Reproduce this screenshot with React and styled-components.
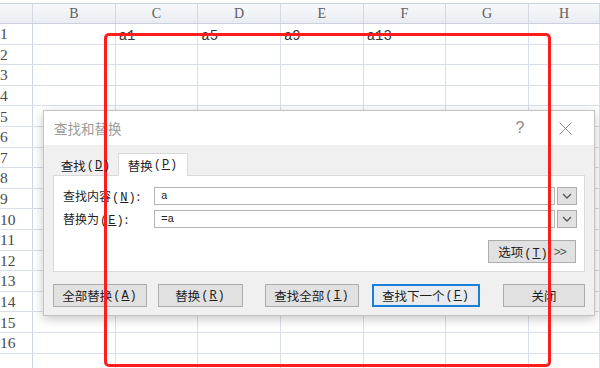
import React from "react";
import styled, { createGlobalStyle } from "styled-components";

const GlobalStyle = createGlobalStyle`
  html, body { margin: 0; padding: 0; background: #ffffff; }
  body { overflow: hidden; }
  * { box-sizing: border-box; }
`;

const COLS = "33px repeat(6, 82.67px) 1fr";
const GRID = "#d9dfe8";

const Page = styled.div`
  position: relative;
  width: 600px;
  height: 368px;
  overflow: hidden;
  background: #fff;
`;

const Sheet = styled.div`
  padding-top: 3px;
  display: flex;
  flex-direction: column;
`;

const HeaderRow = styled.div`
  display: grid;
  grid-template-columns: ${COLS};
  height: 21px;
  background: linear-gradient(#f7f8fa, #e9edf2);
  border-top: 1px solid #c9d2de;
  border-bottom: 1px solid #c9d2de;
`;

const HeaderCell = styled.div`
  display: flex;
  align-items: center;
  justify-content: center;
  border-right: 1px solid #d3dae4;
  font-family: "Liberation Serif", serif;
  font-size: 14px;
  color: #5e5e5e;
`;

const Row = styled.div`
  display: grid;
  grid-template-columns: ${COLS};
  height: 20.6px;
  border-bottom: 1px solid ${GRID};
`;

const RowHead = styled.div`
  display: flex;
  align-items: center;
  padding-top: 1px;
  border-right: 1px solid #cfd6e0;
  font-family: "Liberation Serif", serif;
  font-size: 15.5px;
  color: #4a4a4a;
`;

const Cell = styled.div`
  display: flex;
  align-items: flex-end;
  padding: 0 0 0 3px;
  border-right: 1px solid ${GRID};
  font-family: "Liberation Mono", monospace;
  font-size: 14px;
  line-height: 16px;
  color: #333;
`;

const Dialog = styled.div`
  position: absolute;
  left: 43px;
  top: 110px;
  width: 552px;
  background: #f0f0f0;
  border: 1px solid #c4c4c4;
  box-shadow: 0 3px 10px rgba(0, 0, 0, 0.22);
  font-family: "Noto Sans CJK SC", sans-serif;
`;

const TitleBar = styled.div`
  height: 34px;
  background: #fff;
  display: flex;
  align-items: center;
  padding: 0 0 0 10px;
`;

const Title = styled.div`
  flex: 1;
  font-size: 13.5px;
  color: #9b9b9b;
`;

const Help = styled.div`
  width: 40px;
  font-family: "Liberation Sans", sans-serif;
  font-size: 16px;
  color: #8a8a8a;
  text-align: center;
`;

const Close = styled.div`
  width: 50px;
  display: flex;
  align-items: center;
  justify-content: center;
  margin-right: 4px;
`;

const Body = styled.div`
  padding: 8px 9px 8px 9px;
`;

const Tabs = styled.div`
  display: flex;
  align-items: flex-end;
  padding-left: 1px;
  height: 22px;
`;

const Tab = styled.div`
  position: relative;
  z-index: 1;
  display: flex;
  align-items: center;
  justify-content: center;
  width: ${(p) => (p.$active ? "70px" : "64px")};
  height: ${(p) => (p.$active ? "23px" : "20px")};
  margin-bottom: ${(p) => (p.$active ? "-1px" : "0")};
  background: ${(p) => (p.$active ? "#fff" : "transparent")};
  border: 1px solid ${(p) => (p.$active ? "#d9d9d9" : "transparent")};
  border-bottom: none;
  font-size: 12.5px;
  color: #1e1e1e;
`;

const Panel = styled.div`
  background: #fff;
  border: 1px solid #d9d9d9;
  height: 97px;
  padding: 11px 7px 0 9px;
  display: flex;
  flex-direction: column;
  gap: 5px;
`;

const FieldRow = styled.div`
  display: grid;
  grid-template-columns: 91px 1fr;
  align-items: center;
  height: 18px;
`;

const Label = styled.div`
  font-size: 12px;
  color: #1e1e1e;
  white-space: nowrap;
`;

const Hot = styled.span`
  font-family: "Liberation Mono", monospace;
  font-size: 12px;
  letter-spacing: 1px;
  margin-left: 1px;
`;

const Key = styled.span`
  text-decoration: underline;
`;

const Combo = styled.div`
  display: flex;
  height: 18px;
  gap: 2px;
`;

const Input = styled.div`
  flex: 1;
  border: 1px solid #b4b4b4;
  display: flex;
  align-items: center;
  padding-left: 6px;
  font-family: "Liberation Mono", monospace;
  font-size: 11px;
  color: #222;
`;

const DropButton = styled.div`
  width: 20px;
  background: #e1e1e1;
  border: 1px solid #adadad;
  display: flex;
  align-items: center;
  justify-content: center;
`;

const OptionsRow = styled.div`
  display: flex;
  justify-content: flex-end;
  margin-top: 7px;
  padding-right: 1px;
`;

const Buttons = styled.div`
  display: flex;
  margin-top: 12px;
`;

const Button = styled.div`
  width: ${(p) => p.$w}px;
  margin-left: ${(p) => p.$ml || 0}px;
  height: 23px;
  display: flex;
  align-items: center;
  justify-content: center;
  gap: ${(p) => p.$gap || 0}px;
  background: ${(p) => (p.$default ? "#e9ecef" : "#e1e1e1")};
  border: ${(p) => (p.$default ? "2px solid #1a7fd6" : "1px solid #adadad")};
  font-size: 12.5px;
  color: #1e1e1e;
  white-space: nowrap;
`;

const Chevrons = styled.span`
  font-family: "Liberation Sans", sans-serif;
  font-size: 12px;
  color: #555;
  letter-spacing: -1px;
`;

const Annotation = styled.div`
  position: absolute;
  left: 104px;
  top: 33px;
  width: 447px;
  height: 334px;
  border: 3.5px solid #ff1c1c;
  border-radius: 5px;
  pointer-events: none;
`;

const letters = ["B", "C", "D", "E", "F", "G", "H"];
const row1 = ["", "a1", "a5", "a9", "a13", "", ""];

function Chevron() {
  return (
    <svg width="10" height="6" viewBox="0 0 10 6">
      <path d="M1 1 L5 5 L9 1" fill="none" stroke="#555" strokeWidth="1.3" />
    </svg>
  );
}

function Hk({ k }) {
  return (
    <Hot>
      (<Key>{k}</Key>)
    </Hot>
  );
}

export default function App() {
  return (
    <Page>
      <GlobalStyle />
      <Sheet>
        <HeaderRow>
          <HeaderCell />
          {letters.map((l) => (
            <HeaderCell key={l}>{l}</HeaderCell>
          ))}
        </HeaderRow>
        {Array.from({ length: 17 }, (_, i) => (
          <Row key={i}>
            <RowHead>{i < 16 ? i + 1 : ""}</RowHead>
            {letters.map((l, j) => (
              <Cell key={l}>{i === 0 ? row1[j] : ""}</Cell>
            ))}
          </Row>
        ))}
      </Sheet>

      <Dialog>
        <TitleBar>
          <Title>查找和替换</Title>
          <Help>?</Help>
          <Close>
            <svg width="13" height="13" viewBox="0 0 13 13">
              <path d="M0.5 0.5 L12.5 12.5 M12.5 0.5 L0.5 12.5" stroke="#8a8a8a" strokeWidth="1" />
            </svg>
          </Close>
        </TitleBar>
        <Body>
          <Tabs>
            <Tab>
              查找<Hk k="D" />
            </Tab>
            <Tab $active>
              替换<Hk k="P" />
            </Tab>
          </Tabs>
          <Panel>
            <FieldRow>
              <Label>
                查找内容<Hk k="N" />:
              </Label>
              <Combo>
                <Input>a</Input>
                <DropButton>
                  <Chevron />
                </DropButton>
              </Combo>
            </FieldRow>
            <FieldRow>
              <Label>
                替换为<Hk k="E" />:
              </Label>
              <Combo>
                <Input>=a</Input>
                <DropButton>
                  <Chevron />
                </DropButton>
              </Combo>
            </FieldRow>
            <OptionsRow>
              <Button $w={88} $gap={5}>
                <span>
                  选项<Hk k="T" />
                </span>
                <Chevrons>&gt;&gt;</Chevrons>
              </Button>
            </OptionsRow>
          </Panel>
          <Buttons>
            <Button $w={94}>
              全部替换<Hk k="A" />
            </Button>
            <Button $w={85} $ml={11}>
              替换<Hk k="R" />
            </Button>
            <Button $w={94} $ml={22}>
              查找全部<Hk k="I" />
            </Button>
            <Button $w={108} $ml={13} $default>
              查找下一个<Hk k="F" />
            </Button>
            <Button $w={82} $ml={23}>
              关闭
            </Button>
          </Buttons>
        </Body>
      </Dialog>

      <Annotation />
    </Page>
  );
}
